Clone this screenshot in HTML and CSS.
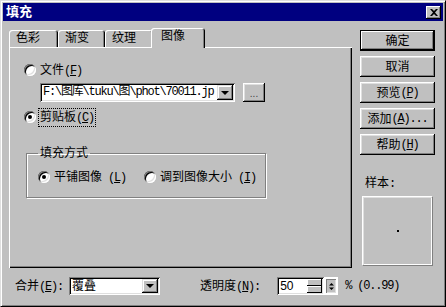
FILE: index.html
```html
<!DOCTYPE html>
<html lang="zh-CN">
<head>
    <meta charset="UTF-8">
    <title>填充</title>
    <link rel="stylesheet" href="styles.css">
</head>
<body>
    <div class="window">
        <div class="titlebar">
            <span class="title">填充</span>
            <span class="close">
                <svg width="8" height="7" viewBox="0 0 8 7"><path d="M0 0h2l2 2 2-2h2L5 3.5 8 7H6L4 5 2 7H0l3-3.5z" fill="#000"/></svg>
            </span>
        </div>

        <div class="content">
            <div class="main">
                <div class="tabs">
                    <div class="tab">色彩</div>
                    <div class="tab">渐变</div>
                    <div class="tab">纹理</div>
                    <div class="tab active">图像</div>
                </div>
                <div class="panel">
                    <div class="radio-row">
                        <span class="radio"></span>
                        <span>文件<span class="mono">(<u>F</u>)</span></span>
                    </div>
                    <div class="file-row">
                        <div class="combo file-combo">
                            <span class="combo-text mono">F:\图库\tuku\图\phot\70011.jp</span>
                            <span class="drop"><span class="arrow"></span></span>
                        </div>
                        <div class="button dots">...</div>
                    </div>
                    <div class="radio-row clip">
                        <span class="radio checked"></span>
                        <span class="focus">剪贴板<span class="mono">(<u>C</u>)</span></span>
                    </div>
                    <fieldset class="group">
                        <legend>填充方式</legend>
                        <div class="group-row">
                            <div class="radio-row first">
                                <span class="radio checked"></span>
                                <span>平铺图像<span class="mono"> (<u>L</u>)</span></span>
                            </div>
                            <div class="radio-row">
                                <span class="radio"></span>
                                <span>调到图像大小<span class="mono"> (<u>I</u>)</span></span>
                            </div>
                        </div>
                    </fieldset>
                </div>
            </div>

            <div class="side">
                <div class="button default">确定</div>
                <div class="button">取消</div>
                <div class="button">预览<span class="mono">(<u>P</u>)</span></div>
                <div class="button">添加<span class="mono">(<u>A</u>)...</span></div>
                <div class="button">帮助<span class="mono">(<u>H</u>)</span></div>
                <div class="sample-label">样本<span class="mono">:</span></div>
                <div class="sample"><span class="sample-dot"></span></div>
            </div>

            <div class="bottom-row">
                <span class="label">合并<span class="mono">(<u>E</u>):</span></span>
                <div class="combo merge-combo">
                    <span class="combo-text">覆叠</span>
                    <span class="drop"><span class="arrow"></span></span>
                </div>
                <span class="label opacity-label">透明度<span class="mono">(<u>N</u>):</span></span>
                <div class="spin">
                    <div class="spin-field">
                        <span class="spin-text">50</span>
                        <span class="spin-buttons">
                            <span class="spin-btn"></span>
                            <span class="spin-btn"></span>
                        </span>
                    </div>
                    <div class="spin-extra">
                        <svg width="5" height="7" viewBox="0 0 5 7"><path d="M2.5 0L5 2.5H0zM0 4.5h5L2.5 7z" fill="#000"/></svg>
                    </div>
                </div>
                <span class="range mono">% (0..99)</span>
            </div>
        </div>
    </div>
</body>
</html>
```

FILE: styles.css
```css
body {
    margin: 0;
    background: #c0c0c0;
    font-family: "Liberation Sans", "Noto Sans CJK SC", sans-serif;
    font-size: 12px;
    line-height: 14px;
    color: #000;
}

.mono {
    font-family: "Liberation Mono", "Noto Sans CJK SC", monospace;
    letter-spacing: -1.2px;
}

.window {
    width: 446px;
    height: 307px;
    box-sizing: border-box;
    background: #c0c0c0;
    border: 1px solid;
    border-color: #dfdfdf #000 #000 #dfdfdf;
    box-shadow: inset 1px 1px #fff, inset -1px -1px #808080;
    padding: 2px;
}

.titlebar {
    height: 18px;
    background: #000080;
    display: flex;
    align-items: center;
    justify-content: space-between;
    padding: 0 2px 0 3px;
}

.title {
    color: #fff;
    font-weight: bold;
    font-size: 13px;
}

.close {
    width: 15px;
    height: 13px;
    box-sizing: border-box;
    background: #c0c0c0;
    box-shadow: inset -1px -1px #000, inset 1px 1px #fff, inset -2px -2px #808080;
    display: flex;
    align-items: center;
    justify-content: center;
}

.content {
    display: grid;
    grid-template-columns: 343px 75px;
    column-gap: 8px;
    padding: 7px 0 0 6px;
}

/* 标签页 */
.tabs {
    display: flex;
    align-items: flex-end;
    height: 19px;
}

.tab {
    height: 17px;
    box-sizing: border-box;
    padding-left: 7px;
    line-height: 17px;
    border-radius: 3px 3px 0 0;
    box-shadow: inset 1px 1px #fff, inset -1px 0 #000, inset -2px 0 #808080;
}

.tab:nth-child(1) { width: 49px; }
.tab:nth-child(2) { width: 47px; }
.tab:nth-child(3) { width: 48px; }

.tab.active {
    width: 54px;
    height: 20px;
    margin: 0 -2px -1px;
    padding-left: 10px;
    line-height: 17px;
    background: #c0c0c0;
    position: relative;
    z-index: 1;
}

.panel {
    height: 221px;
    box-sizing: border-box;
    box-shadow: inset 1px 1px #fff, inset -1px -1px #000, inset -2px -2px #808080;
    padding: 16px 0 0 15px;
}

.radio-row {
    display: flex;
    align-items: center;
    gap: 4px;
    height: 14px;
    white-space: nowrap;
}

.radio {
    width: 12px;
    height: 12px;
    flex: none;
    border-radius: 50%;
    background: #fff;
    box-shadow: inset 1px 1px #808080, inset -1px -1px #fff, inset 2px 2px #000, inset -2px -2px #dfdfdf;
    display: flex;
    align-items: center;
    justify-content: center;
}

.radio.checked::after {
    content: "";
    width: 4px;
    height: 4px;
    border-radius: 50%;
    background: #000;
}

.file-row {
    display: flex;
    margin: 6px 0 0 16px;
}

.combo {
    height: 19px;
    box-sizing: border-box;
    background: #fff;
    padding: 2px;
    display: flex;
    box-shadow: inset 1px 1px #808080, inset -1px -1px #fff, inset 2px 2px #000, inset -2px -2px #dfdfdf;
}

.file-combo {
    width: 195px;
}

.combo-text {
    flex: 1;
    padding-left: 1px;
    line-height: 15px;
    white-space: nowrap;
    overflow: hidden;
}

.drop {
    width: 16px;
    height: 15px;
    box-sizing: border-box;
    background: #c0c0c0;
    box-shadow: inset -1px -1px #000, inset 1px 1px #dfdfdf, inset -2px -2px #808080, inset 2px 2px #fff;
    display: flex;
    align-items: center;
    justify-content: center;
}

.arrow {
    width: 0;
    height: 0;
    border-left: 4px solid transparent;
    border-right: 4px solid transparent;
    border-top: 4px solid #000;
}

.button {
    height: 21px;
    box-sizing: border-box;
    background: #c0c0c0;
    box-shadow: inset -1px -1px #000, inset 1px 1px #fff, inset -2px -2px #808080, inset 2px 2px #dfdfdf;
    display: flex;
    align-items: center;
    justify-content: center;
    white-space: nowrap;
}

.button.dots {
    width: 22px;
    height: 19px;
    margin-left: 8px;
    font-size: 10px;
    color: #404040;
    padding-top: 2px;
}

.clip {
    margin-top: 8px;
}

.focus {
    outline: 1px dotted #000;
    outline-offset: 1px;
}

.group {
    width: 240px;
    box-sizing: border-box;
    margin: 22px 0 0 2px;
    padding: 10px 0 13px 11px;
    border: 1px solid #808080;
    box-shadow: 1px 1px #fff, inset 1px 1px #fff;
}

.group legend {
    padding: 0 2px;
}

.group-row {
    display: flex;
}

.group-row .first {
    width: 106px;
}

/* 右侧按钮 */
.side {
    padding-top: 2px;
    display: flex;
    flex-direction: column;
    gap: 5px;
}

.button.default {
    box-shadow: inset 0 0 0 1px #000, inset -2px -2px #000, inset 2px 2px #fff, inset -3px -3px #808080;
}

.sample-label {
    margin: 16px 0 0 5px;
}

.sample {
    width: 71px;
    height: 70px;
    margin: 0 0 0 2px;
    box-sizing: border-box;
    border: 1px solid;
    border-color: #fff #808080 #808080 #fff;
    box-shadow: inset 1px 1px #dfdfdf, inset -1px -1px #fff;
    display: flex;
    align-items: center;
    justify-content: center;
}

.sample-dot {
    width: 2px;
    height: 2px;
    background: #000;
}

/* 底部 */
.bottom-row {
    grid-column: 1 / 3;
    display: flex;
    align-items: center;
    height: 18px;
    margin-top: 9px;
    padding-left: 6px;
    white-space: nowrap;
}

.merge-combo {
    width: 91px;
    height: 18px;
    margin-left: 6px;
}

.merge-combo .drop {
    height: 14px;
}

.merge-combo .combo-text {
    line-height: 14px;
}

.opacity-label {
    margin-left: 40px;
}

.spin {
    display: flex;
    margin-left: 17px;
}

.spin-field {
    width: 47px;
    height: 18px;
    box-sizing: border-box;
    background: #fff;
    padding: 2px;
    display: flex;
    box-shadow: inset 1px 1px #808080, inset -1px -1px #fff, inset 2px 2px #000, inset -2px -2px #dfdfdf;
}

.spin-text {
    flex: 1;
    line-height: 14px;
    padding-left: 1px;
}

.spin-buttons {
    width: 15px;
    display: flex;
    flex-direction: column;
}

.spin-btn {
    flex: 1;
    background: #c0c0c0;
    box-shadow: inset -1px -1px #000, inset 1px 1px #fff;
}

.spin-extra {
    width: 14px;
    height: 18px;
    box-sizing: border-box;
    background: #c0c0c0;
    border: 2px solid #fff;
    box-shadow: inset 1px 1px #808080, inset -1px -1px #dfdfdf;
    display: flex;
    align-items: center;
    justify-content: center;
}

.range {
    margin-left: 7px;
}
```
